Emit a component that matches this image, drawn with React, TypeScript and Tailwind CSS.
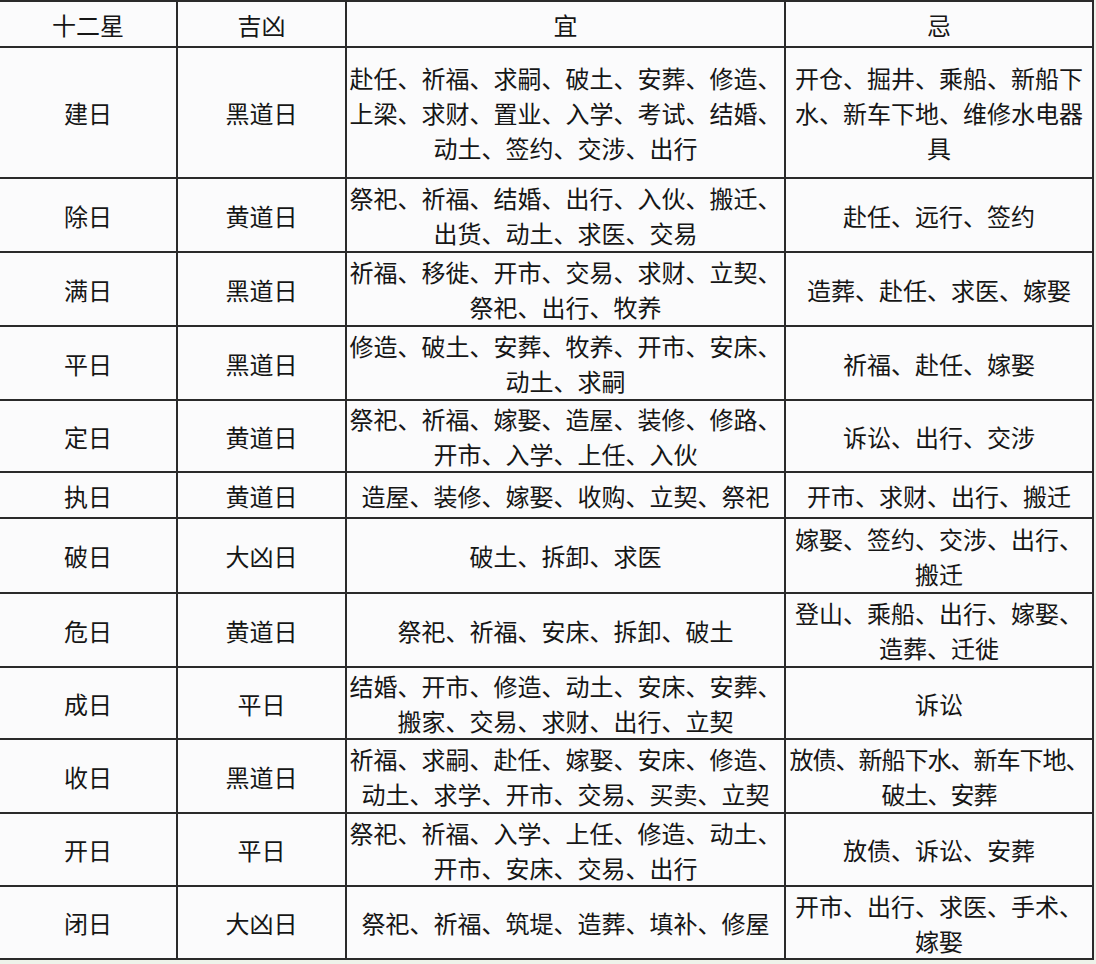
import React from 'react';

type Row = {
  star: string;
  luck: string;
  yi: string[];
  ji: string[];
  h: string;
  tightJi?: boolean;
};

// 十二建星 宜忌表
const rows: Row[] = [
  {
    star: '建日',
    luck: '黑道日',
    yi: ['赴任、祈福、求嗣、破土、安葬、修造、', '上梁、求财、置业、入学、考试、结婚、', '动土、签约、交涉、出行'],
    ji: ['开仓、掘井、乘船、新船下', '水、新车下地、维修水电器', '具'],
    h: 'h-[131px]',
  },
  {
    star: '除日',
    luck: '黄道日',
    yi: ['祭祀、祈福、结婚、出行、入伙、搬迁、', '出货、动土、求医、交易'],
    ji: ['赴任、远行、签约'],
    h: 'h-[74px]',
  },
  {
    star: '满日',
    luck: '黑道日',
    yi: ['祈福、移徙、开市、交易、求财、立契、', '祭祀、出行、牧养'],
    ji: ['造葬、赴任、求医、嫁娶'],
    h: 'h-[74px]',
  },
  {
    star: '平日',
    luck: '黑道日',
    yi: ['修造、破土、安葬、牧养、开市、安床、', '动土、求嗣'],
    ji: ['祈福、赴任、嫁娶'],
    h: 'h-[74px]',
  },
  {
    star: '定日',
    luck: '黄道日',
    yi: ['祭祀、祈福、嫁娶、造屋、装修、修路、', '开市、入学、上任、入伙'],
    ji: ['诉讼、出行、交涉'],
    h: 'h-[72px]',
  },
  {
    star: '执日',
    luck: '黄道日',
    yi: ['造屋、装修、嫁娶、收购、立契、祭祀'],
    ji: ['开市、求财、出行、搬迁'],
    h: 'h-[46px]',
  },
  {
    star: '破日',
    luck: '大凶日',
    yi: ['破土、拆卸、求医'],
    ji: ['嫁娶、签约、交涉、出行、', '搬迁'],
    h: 'h-[75px]',
  },
  {
    star: '危日',
    luck: '黄道日',
    yi: ['祭祀、祈福、安床、拆卸、破土'],
    ji: ['登山、乘船、出行、嫁娶、', '造葬、迁徙'],
    h: 'h-[74px]',
  },
  {
    star: '成日',
    luck: '平日',
    yi: ['结婚、开市、修造、动土、安床、安葬、', '搬家、交易、求财、出行、立契'],
    ji: ['诉讼'],
    h: 'h-[72px]',
  },
  {
    star: '收日',
    luck: '黑道日',
    yi: ['祈福、求嗣、赴任、嫁娶、安床、修造、', '动土、求学、开市、交易、买卖、立契'],
    ji: ['放债、新船下水、新车下地、', '破土、安葬'],
    h: 'h-[74px]',
    tightJi: true,
  },
  {
    star: '开日',
    luck: '平日',
    yi: ['祭祀、祈福、入学、上任、修造、动土、', '开市、安床、交易、出行'],
    ji: ['放债、诉讼、安葬'],
    h: 'h-[73px]',
  },
  {
    star: '闭日',
    luck: '大凶日',
    yi: ['祭祀、祈福、筑堤、造葬、填补、修屋'],
    ji: ['开市、出行、求医、手术、', '嫁娶'],
    h: 'h-[73px]',
  },
];

const Cell = ({ lines, last, tight }: { lines: string[]; last?: boolean; tight?: boolean }) => (
  <div
    className={`flex flex-col items-center justify-center text-center ${
      last ? '' : 'border-r-2 border-[#2a2a2a]'
    } ${tight ? 'tracking-[-1px]' : ''}`}
  >
    {lines.map((l, i) => (
      <div key={i} className="whitespace-nowrap leading-[35px]">
        {l}
      </div>
    ))}
  </div>
);

export default function App() {
  return (
    <div
      className="w-[1096px] h-[964px] overflow-hidden bg-[#eef3ea] text-[24px] text-[#161616]"
      style={{ fontFamily: '"Noto Sans CJK SC", "Noto Sans", sans-serif' }}
    >
      <div className="w-[1094px] bg-[#fbfbfc] border-t-2 border-r-2 border-[#2a2a2a]">
        <div className="grid grid-cols-[178px_169px_439px_306px] h-[46px] border-b-2 border-[#2a2a2a]">
          <Cell lines={['十二星']} />
          <Cell lines={['吉凶']} />
          <Cell lines={['宜']} />
          <Cell lines={['忌']} last />
        </div>
        {rows.map((r) => (
          <div
            key={r.star}
            className={`grid grid-cols-[178px_169px_439px_306px] border-b-2 border-[#2a2a2a] ${r.h}`}
          >
            <Cell lines={[r.star]} />
            <Cell lines={[r.luck]} />
            <Cell lines={r.yi} />
            <Cell lines={r.ji} last tight={r.tightJi} />
          </div>
        ))}
      </div>
    </div>
  );
}
